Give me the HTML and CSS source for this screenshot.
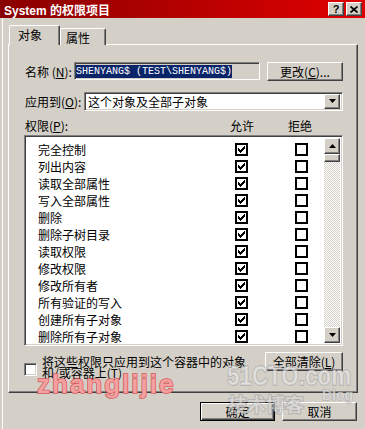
FILE: index.html
```html
<!DOCTYPE html>
<html>

<head>
    <title>System 的权限项目</title>
    <link rel="stylesheet" href="styles.css">
</head>

<body>
    <div class="window">
        <div class="titlebar">
            <span class="title">System <span class="title-cjk">的权限项目</span></span>
            <div class="caption-btns">
                <span class="cap-btn raised">?</span>
                <span class="cap-btn raised">
                    <svg width="8" height="7" viewBox="0 0 8 7"><path d="M0.5 0.5 L7.5 6.5 M7.5 0.5 L0.5 6.5" stroke="#000" stroke-width="1.7"/></svg>
                </span>
            </div>
        </div>

        <div class="tabs">
            <div class="tab active">对象</div>
            <div class="tab">属性</div>
        </div>

        <div class="panel">
            <div class="row name-row">
                <span class="lbl lbl-name">名称 (<u>N</u>):</span>
                <div class="field sunken"><span class="sel">SHENYANG$ (TEST\SHENYANG$)</span></div>
                <button class="btn raised btn-change">更改(<u>C</u>)...</button>
            </div>

            <div class="row apply-row">
                <span class="lbl lbl-apply">应用到(<u>O</u>):</span>
                <div class="combo sunken">
                    <span class="combo-text">这个对象及全部子对象</span>
                    <span class="combo-btn raised">
                        <svg width="7" height="4" viewBox="0 0 7 4"><polygon points="0,0 7,0 3.5,4" fill="#000"/></svg>
                    </span>
                </div>
            </div>

            <div class="perm-head">
                <span>权限(<u>P</u>):</span>
                <span>允许</span>
                <span>拒绝</span>
            </div>

            <div class="list sunken">
                <div class="list-rows" id="rows"></div>
                <div class="scrollbar">
                    <span class="sb-btn raised">
                        <svg width="7" height="4" viewBox="0 0 7 4"><polygon points="0,4 7,4 3.5,0" fill="#000"/></svg>
                    </span>
                    <span class="sb-thumb raised"></span>
                    <span class="sb-track"></span>
                    <span class="sb-btn raised">
                        <svg width="7" height="4" viewBox="0 0 7 4"><polygon points="0,0 7,0 3.5,4" fill="#000"/></svg>
                    </span>
                </div>
            </div>

            <div class="row bottom-row">
                <span class="chk sunken"></span>
                <span class="chk-text">将这些权限只应用到这个容器中的对象和/或容器上(<u>T</u>)</span>
                <button class="btn raised btn-clear">全部清除(<u>L</u>)</button>
            </div>
        </div>

        <div class="footer">
            <button class="btn btn-ok">确定</button>
            <button class="btn raised">取消</button>
        </div>

        <div class="wm wm-name">zhanglijie</div>
        <div class="wm wm-site">51CTO.com</div>
        <div class="wm wm-blog-cn">技术博客</div>
        <div class="wm wm-blog">Blog</div>
    </div>

    <script>
        const perms = ["完全控制", "列出内容", "读取全部属性", "写入全部属性", "删除", "删除子树目录",
            "读取权限", "修改权限", "修改所有者", "所有验证的写入", "创建所有子对象", "删除所有子对象"];
        const check = '<svg width="7" height="7" viewBox="0 0 7 7"><path fill="#000" d="M6 0h1v1h-1z M5 1h2v1h-2z M0 2h1v1h-1z M4 2h3v1h-3z M0 3h2v1h-2z M3 3h3v1h-3z M0 4h5v1h-5z M1 5h3v1h-3z M2 6h1v1h-1z"/></svg>';
        let rows = document.getElementById("rows");
        perms.forEach(name => {
            rows.innerHTML += '<div class="perm-row"><span>' + name + '</span>' +
                '<span class="box">' + check + '</span><span class="box"></span></div>';
        });
    </script>
</body>

</html>
```

FILE: styles.css
```css
body {
    margin: 0;
    font-family: "Noto Sans CJK SC", sans-serif;
    font-size: 12px;
    color: #000;
}

.window {
    position: relative;
    width: 365px;
    height: 429px;
    overflow: hidden;
    background-color: #d4d0c8;
    box-shadow: inset 2px 0 #d4d0c8, inset 3px 0 #fff;
}

.titlebar {
    height: 18px;
    display: flex;
    align-items: center;
    padding-left: 4px;
    background: linear-gradient(to right, #880000, #b00000 45%, #e00000);
    color: #fff;
}

.title {
    font: bold 12px "Liberation Sans", sans-serif;
}

.title-cjk {
    font: bold 12px "Noto Sans CJK SC", sans-serif;
}

.caption-btns {
    margin-left: auto;
    margin-right: 3px;
    display: flex;
    gap: 2px;
}

.raised {
    box-sizing: border-box;
    background-color: #d4d0c8;
    border: 1px solid;
    border-color: #fff #404040 #404040 #fff;
    box-shadow: inset -1px -1px #808080;
}

.sunken {
    box-sizing: border-box;
    border: 1px solid;
    border-color: #808080 #fff #fff #808080;
    box-shadow: inset 1px 1px #404040, inset -1px -1px #d4d0c8;
}

.cap-btn {
    width: 16px;
    height: 14px;
    display: flex;
    align-items: center;
    justify-content: center;
    font: bold 11px "Liberation Sans", sans-serif;
    color: #000;
}

.tabs {
    display: flex;
    align-items: flex-end;
    height: 20px;
    margin-top: 7px;
    padding-left: 9px;
    position: relative;
    z-index: 1;
    margin-bottom: -1px;
}

.tab {
    box-sizing: border-box;
    height: 17px;
    width: 46px;
    padding-left: 5px;
    line-height: 17px;
    background-color: #d4d0c8;
    border-top: 1px solid #fff;
    border-left: 1px solid #fff;
    border-right: 1px solid #404040;
    box-shadow: inset -1px 0 #808080;
    border-radius: 2px 2px 0 0;
}

.tab.active {
    width: 51px;
    height: 20px;
    padding-left: 8px;
    line-height: 18px;
}

.panel {
    box-sizing: border-box;
    width: 350px;
    height: 349px;
    margin-left: 8px;
    padding: 16px 14px 0 15px;
    border: 1px solid;
    border-color: #fff #404040 #404040 #fff;
    box-shadow: inset -1px -1px #808080;
}

.row {
    display: flex;
    align-items: center;
}

.name-row {
    height: 20px;
}

.lbl {
    padding-left: 1px;
}

.lbl-name {
    width: 49px;
}

.field {
    width: 186px;
    height: 18px;
    padding: 2px 1px;
    display: flex;
    align-items: center;
    background-color: #d4d0c8;
}

.sel {
    background-color: #0a246a;
    color: #fff;
    font: 10px "Liberation Mono", monospace;
    line-height: 13px;
    white-space: pre;
}

.btn {
    height: 19px;
    padding: 0;
    font-family: "Noto Sans CJK SC", sans-serif;
    font-size: 12px;
    line-height: 15px;
    color: #000;
    width: 75px;
}

.btn-change {
    margin-left: auto;
    width: 76px;
}

.apply-row {
    height: 20px;
    margin-top: 10px;
}

.lbl-apply {
    width: 59px;
}

.combo {
    width: 259px;
    height: 19px;
    padding: 2px;
    display: flex;
    align-items: center;
    background-color: #fff;
}

.combo-text {
    padding-left: 1px;
    line-height: 15px;
}

.combo-btn {
    margin-left: auto;
    width: 16px;
    height: 15px;
    display: flex;
    align-items: center;
    justify-content: center;
}

.perm-head {
    display: grid;
    grid-template-columns: 206px 58px auto;
    height: 14px;
    line-height: 14px;
    margin-top: 8px;
}

.perm-head span:first-child {
    padding-left: 1px;
}

.list {
    display: flex;
    width: 319px;
    height: 211px;
    margin-top: 2px;
    padding: 2px;
    background-color: #fff;
}

.list-rows {
    flex: 1;
    padding-top: 3px;
    padding-left: 11px;
}

.perm-row {
    display: grid;
    grid-template-columns: 197px 60px 13px;
    height: 17px;
    align-items: center;
    line-height: 17px;
}

.box {
    box-sizing: border-box;
    width: 13px;
    height: 13px;
    border: 2px solid #000;
    display: flex;
    align-items: center;
    justify-content: center;
}

.scrollbar {
    width: 16px;
    display: flex;
    flex-direction: column;
}

.sb-btn {
    height: 16px;
    display: flex;
    align-items: center;
    justify-content: center;
}

.sb-thumb {
    height: 8px;
}

.sb-track {
    flex: 1;
    background-image: conic-gradient(#fff 25%, #d4d0c8 0 50%, #fff 0 75%, #d4d0c8 0);
    background-size: 2px 2px;
}

.bottom-row {
    margin-top: 6px;
    align-items: flex-start;
}

.chk {
    width: 13px;
    height: 13px;
    margin-top: 11px;
    background-color: #fff;
}

.chk-text {
    width: 212px;
    margin-left: 5px;
    margin-top: 4px;
    line-height: 11px;
}

.btn-clear {
    margin-left: auto;
    width: 78px;
}

.footer {
    display: flex;
    justify-content: flex-end;
    gap: 7px;
    margin-top: 9px;
    padding-right: 8px;
}

.btn-ok {
    box-sizing: border-box;
    background-color: #d4d0c8;
    border: 1px solid #000;
    box-shadow: inset 1px 1px #fff, inset -1px -1px #404040, inset -2px -2px #808080;
}

.wm {
    position: absolute;
    white-space: nowrap;
    pointer-events: none;
}

.wm-name {
    left: 37px;
    top: 371px;
    font: bold 26px "Liberation Sans", sans-serif;
    line-height: 26px;
    letter-spacing: 2px;
    color: #f2a0a0;
    -webkit-text-stroke: 1.5px #d85858;
    paint-order: stroke fill;
}

.wm-site {
    left: 227px;
    top: 362px;
    font: bold 28px "Liberation Sans", sans-serif;
    line-height: 28px;
    transform: scaleX(0.8);
    transform-origin: left top;
    color: rgba(235, 235, 235, 0.6);
    -webkit-text-stroke: 1.5px rgba(140, 140, 140, 0.5);
    paint-order: stroke fill;
}

.wm-blog-cn {
    left: 228px;
    top: 394px;
    font: bold 19px "Noto Sans CJK SC", sans-serif;
    line-height: 19px;
    color: rgba(235, 235, 235, 0.55);
    -webkit-text-stroke: 1.5px rgba(140, 140, 140, 0.5);
    paint-order: stroke fill;
}

.wm-blog {
    left: 322px;
    top: 387px;
    font: bold 14px "Liberation Sans", sans-serif;
    line-height: 16px;
    color: rgba(235, 235, 235, 0.6);
    -webkit-text-stroke: 1px rgba(140, 140, 140, 0.5);
    paint-order: stroke fill;
}
```
